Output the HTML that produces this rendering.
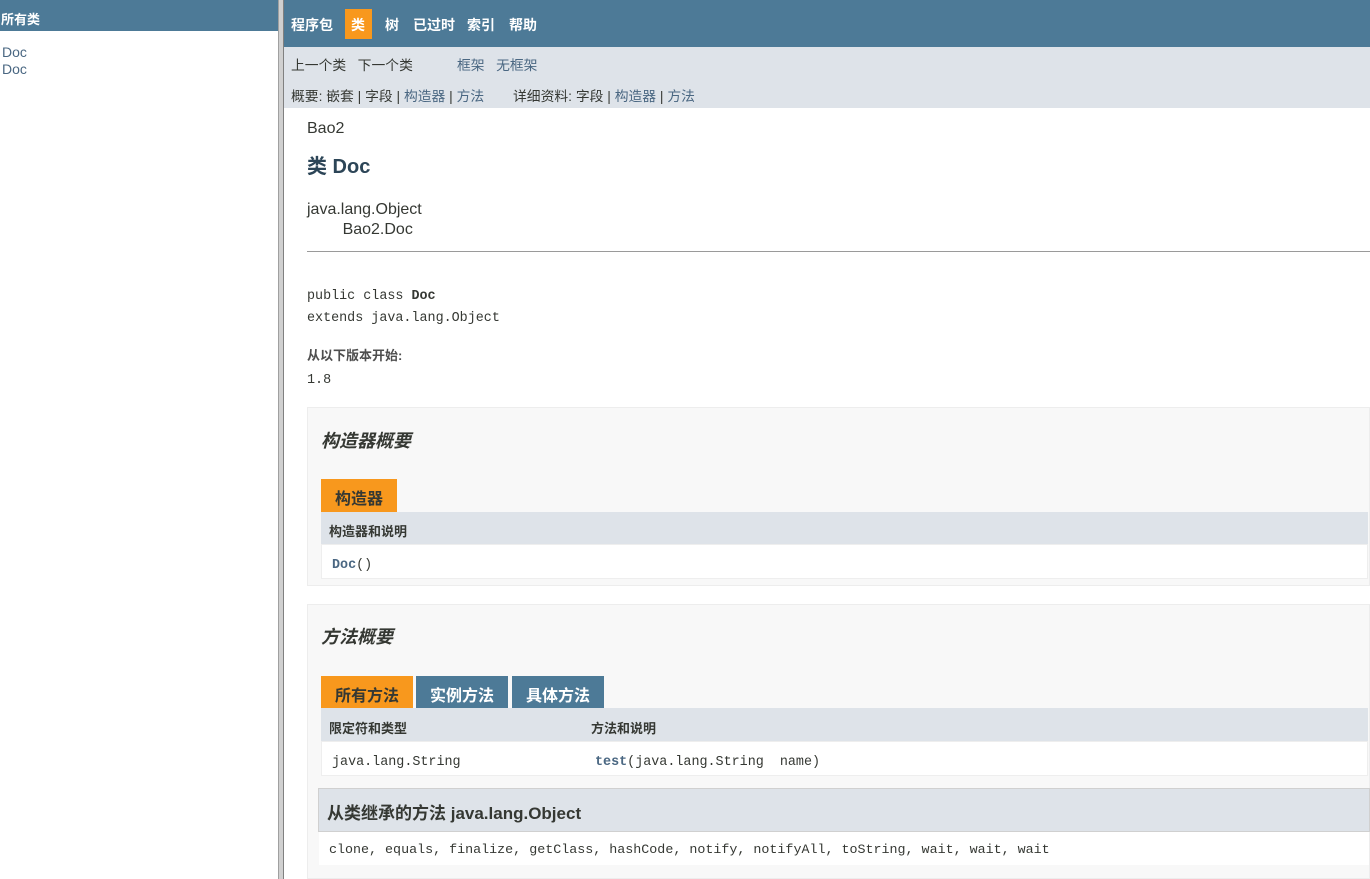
<!DOCTYPE html>
<html><head><meta charset="utf-8"><style>
*{margin:0;padding:0;box-sizing:border-box}
body{width:1370px;height:879px;overflow:hidden;background:#fff;font-family:"Liberation Sans","Noto Sans CJK SC",sans-serif;font-size:14px;color:#353833;position:relative}
.a{position:absolute;white-space:nowrap}
.mono{font-family:"Liberation Mono","Noto Sans CJK SC",monospace}
.lnk{color:#4A6782}
.n{position:absolute;top:15px;color:#fff;font-size:14px;font-weight:bold}
</style></head><body>
<div class="a" style="left:0;top:0;width:278px;height:31px;background:#4D7A97"></div>
<div class="a" style="left:1px;top:9px;color:#fff;font-weight:bold;font-size:13px">所有类</div>
<div class="a lnk" style="left:2px;top:44px;font-size:14px;line-height:17px">Doc<br>Doc</div>
<div class="a" style="left:278px;top:0;width:6px;height:879px;background:#d0d0d0;border-left:1px solid #a0a0a0;border-right:1px solid #808080"></div>
<div class="a" style="left:284px;top:0;width:1086px;height:47px;background:#4D7A97"></div>
<div class="a" style="left:345px;top:9px;width:27px;height:30px;background:#F8981D"></div>
<span class="n" style="left:291px">程序包</span>
<span class="n" style="left:351px">类</span>
<span class="n" style="left:385px">树</span>
<span class="n" style="left:413px">已过时</span>
<span class="n" style="left:467px">索引</span>
<span class="n" style="left:509px">帮助</span>
<div class="a" style="left:284px;top:47px;width:1086px;height:61px;background:#dee3e9"></div>
<div class="a" style="left:291px;top:54px;font-size:13.8px">上一个类&nbsp;&nbsp;&nbsp;下一个类</div>
<div class="a lnk" style="left:457px;top:54px;font-size:13.8px">框架&nbsp;&nbsp;&nbsp;无框架</div>
<div class="a" style="left:291px;top:85px;font-size:13.8px">概要: 嵌套 | 字段 | <span class="lnk">构造器</span> | <span class="lnk">方法</span></div>
<div class="a" style="left:513px;top:85px;font-size:13.8px">详细资料: 字段 | <span class="lnk">构造器</span> | <span class="lnk">方法</span></div>
<div class="a" style="left:307px;top:120px;font-size:16px">Bao2</div>
<div class="a" style="left:307px;top:150px;font-size:20px;font-weight:bold;color:#2c4557">类 Doc</div>
<div class="a" style="left:307px;top:200px;font-size:16px;line-height:20px">java.lang.Object<br>&nbsp;&nbsp;&nbsp;&nbsp;&nbsp;&nbsp;&nbsp;&nbsp;Bao2.Doc</div>
<div class="a" style="left:307px;top:251px;width:1063px;height:1px;background:#9a9a9a"></div>
<div class="a mono" style="left:307px;top:286px;font-size:13.4px;line-height:22px">public class <b>Doc</b><br>extends java.lang.Object</div>
<div class="a" style="left:307px;top:345px;font-size:13px;font-weight:bold;color:#4E4E4E">从以下版本开始:</div>
<div class="a mono" style="left:307px;top:373px;font-size:13.4px">1.8</div>
<div class="a" style="left:307px;top:407px;width:1063px;height:179px;background:#f8f8f8;border:1px solid #ededed"></div>
<div class="a" style="left:321px;top:427px;font-size:18px;font-weight:bold;font-style:italic">构造器概要</div>
<div class="a" style="left:321px;top:479px;width:76px;height:33px;background:#F8981D;font-size:16px;font-weight:bold;padding:6px 0 0 14px">构造器</div>
<div class="a" style="left:321px;top:512px;width:1047px;height:32px;background:#dee3e9;font-size:13px;font-weight:bold;padding:9px 0 0 8px">构造器和说明</div>
<div class="a" style="left:321px;top:544px;width:1047px;height:35px;background:#fff;border:1px solid #eee"></div>
<div class="a mono" style="left:332px;top:558px;font-size:13.4px"><span class="lnk" style="font-weight:bold">Doc</span>()</div>
<div class="a" style="left:307px;top:604px;width:1063px;height:275px;background:#f8f8f8;border:1px solid #ededed"></div>
<div class="a" style="left:321px;top:623px;font-size:18px;font-weight:bold;font-style:italic">方法概要</div>
<div class="a" style="left:321px;top:676px;width:92px;height:32px;background:#F8981D;font-size:16px;font-weight:bold;padding:6px 0 0 14px">所有方法</div>
<div class="a" style="left:416px;top:676px;width:92px;height:32px;background:#4D7A97;color:#fff;font-size:16px;font-weight:bold;padding:6px 0 0 14px">实例方法</div>
<div class="a" style="left:512px;top:676px;width:92px;height:32px;background:#4D7A97;color:#fff;font-size:16px;font-weight:bold;padding:6px 0 0 14px">具体方法</div>
<div class="a" style="left:321px;top:708px;width:1047px;height:33px;background:#dee3e9"></div>
<div class="a" style="left:329px;top:718px;font-size:13px;font-weight:bold">限定符和类型</div>
<div class="a" style="left:591px;top:718px;font-size:13px;font-weight:bold">方法和说明</div>
<div class="a" style="left:321px;top:741px;width:1047px;height:35px;background:#fff;border:1px solid #eee"></div>
<div class="a mono" style="left:332px;top:755px;font-size:13.4px">java.lang.String</div>
<div class="a mono" style="left:595px;top:755px;font-size:13.4px"><span class="lnk" style="font-weight:bold">test</span>(java.lang.String&nbsp; name)</div>
<div class="a" style="left:318px;top:788px;width:1052px;height:44px;background:#dee3e9;border:1px solid #d0d0d0"></div>
<div class="a" style="left:327px;top:799px;font-size:17px;font-weight:bold">从类继承的方法 java.lang.Object</div>
<div class="a" style="left:319px;top:832px;width:1050px;height:33px;background:#fff"></div>
<div class="a mono" style="left:329px;top:843px;font-size:13.35px">clone, equals, finalize, getClass, hashCode, notify, notifyAll, toString, wait, wait, wait</div>
</body></html>
